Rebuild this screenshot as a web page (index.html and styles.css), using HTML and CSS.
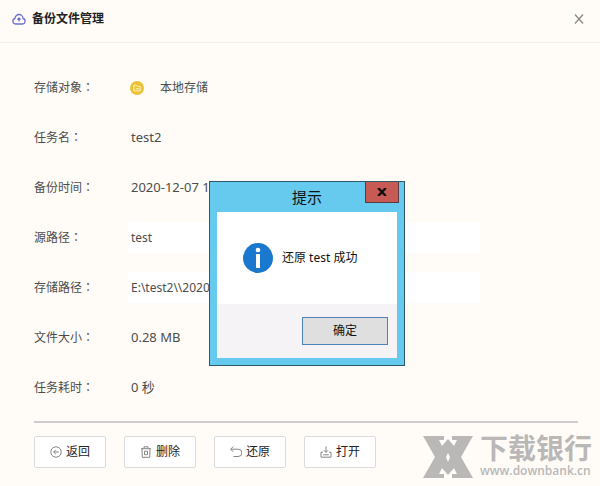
FILE: index.html
```html
<!DOCTYPE html>
<html lang="zh-CN">
<head>
    <meta charset="UTF-8">
    <meta name="viewport" content="width=device-width, initial-scale=1.0">
    <title>备份文件管理</title>
    <link rel="stylesheet" href="styles.css">
</head>
<body>

    <!-- HEADER -->
    <header class="header">
        <svg class="header-icon" viewBox="0 0 14 12" fill="none" stroke="#6a70d8" stroke-width="1.3" stroke-linecap="round" stroke-linejoin="round">
            <path d="M3.5 11a2.8 2.8 0 0 1-.5-5.5 4 4 0 0 1 8 0 2.8 2.8 0 0 1-.5 5.5z"/>
            <path d="M7 8V5.4M5.8 6.2L7 5l1.2 1.2"/>
        </svg>
        <h1>备份文件管理</h1>
        <button class="close" type="button" aria-label="关闭">
            <svg viewBox="0 0 10 10" fill="none" stroke="#8c8a88" stroke-width="1.3"><path d="M1 0.5l8 9M9 0.5l-8 9"/></svg>
        </button>
    </header>

    <!-- DETAIL -->
    <main>
        <div class="row">
            <span class="label">存储对象<span lang="zh-TW">：</span></span>
            <span class="value storage">
                <svg class="folder" viewBox="0 0 14 14">
                    <circle cx="7" cy="7" r="7" fill="#ebc136"/>
                    <path d="M3.8 9.9V4.2h2.5l.9 1.1h3v4.6zM5.8 7.8h3.2" fill="none" stroke="#fff3c0" stroke-width="1"/>
                </svg>
                本地存储
            </span>
        </div>
        <div class="row">
            <span class="label">任务名<span lang="zh-TW">：</span></span>
            <span class="value">test2</span>
        </div>
        <div class="row">
            <span class="label">备份时间<span lang="zh-TW">：</span></span>
            <span class="value">2020-12-07 1</span>
        </div>
        <div class="row">
            <label class="label" for="source">源路径<span lang="zh-TW">：</span></label>
            <input class="value field" id="source" type="text" value="test">
        </div>
        <div class="row">
            <label class="label" for="target">存储路径<span lang="zh-TW">：</span></label>
            <input class="value field" id="target" type="text" value="E:\test2\\2020">
        </div>
        <div class="row">
            <span class="label">文件大小<span lang="zh-TW">：</span></span>
            <span class="value">0.28 MB</span>
        </div>
        <div class="row">
            <span class="label">任务耗时<span lang="zh-TW">：</span></span>
            <span class="value">0 秒</span>
        </div>
    </main>

    <!-- ACTIONS -->
    <footer>
        <button class="action" type="button">
            <svg viewBox="0 0 12 12" fill="none" stroke="#858585"><circle cx="6" cy="6" r="5.2"/><path d="M8.8 6H3.6M5.8 3.8L3.6 6l2.2 2.2"/></svg>
            返回
        </button>
        <button class="action" type="button">
            <svg viewBox="0 0 12 12" fill="none" stroke="#858585"><path d="M1 2.7h10M4 2.5V.8h4v1.7M2 2.7l.3 8.6h7.4l.3-8.6M4.5 5.2h3v3.5h-3z"/></svg>
            删除
        </button>
        <button class="action" type="button">
            <svg viewBox="0 0 12 12" fill="none" stroke="#858585"><path d="M.8 3.2h7.4a3.2 3.2 0 0 1 0 7.3H3.5M3.2.6L.7 3.2l2.5 2.6"/></svg>
            还原
        </button>
        <button class="action" type="button">
            <svg viewBox="0 0 12 12" fill="none" stroke="#858585"><path d="M6 .5v5.8M3.8 4.2L6 6.4l2.2-2.2M3 6.2H1v5h10v-5H9M3.2 8.8h5.6"/></svg>
            打开
        </button>

        <div class="brand">
            <svg class="brand-logo" viewBox="0 0 50 42">
                <path fill="#b9b8b6" fill-rule="evenodd" d="M0 0h21v4h-5l3 6 6-7 6 7 3-6h-5V0h21L38 21l12 21H29v-4h5l-3-6-6 7-6-7-3 6h5v4H0l12-21zM25 17l-2 4 2 5 2-5z"/>
            </svg>
            <div class="brand-text">
                <div class="brand-name">下载银行</div>
                <div class="brand-url">www.downbank.cn</div>
            </div>
        </div>
    </footer>

    <!-- MESSAGE WINDOW -->
    <div class="dialog" role="dialog" aria-labelledby="dialogTitle">
        <div class="dialog-title" id="dialogTitle">提示</div>
        <button class="dialog-close" type="button" aria-label="关闭">
            <svg viewBox="0 0 10 8" fill="none" stroke="#111" stroke-width="2.4"><path d="M1.2 0l7.6 8M8.8 0L1.2 8"/></svg>
        </button>
        <div class="dialog-body">
            <svg class="info" viewBox="0 0 30 30">
                <circle cx="15" cy="15" r="15" fill="#1b78cf"/>
                <circle cx="15" cy="7" r="2.3" fill="#fff"/>
                <rect x="13" y="11" width="4" height="14" fill="#fff"/>
            </svg>
            <span>还原 test 成功</span>
        </div>
        <div class="dialog-foot">
            <button class="ok" type="button">确定</button>
        </div>
    </div>

</body>
</html>
```
FILE: styles.css
```css
* {
    box-sizing: border-box;
}

body {
    margin: 0;
    background: #fffcf7;
    color: #4c4c4c;
    font-family: "Noto Sans", "Noto Sans CJK SC", sans-serif;
    font-size: 12px;
    line-height: 18px;
}

button,
input {
    font: inherit;
    color: inherit;
}

/* HEADER */
.header {
    display: flex;
    align-items: center;
    height: 43px;
    padding: 0 16px 4px 12px;
    border-bottom: 1px solid #f1eff2;
}

.header-icon {
    width: 14px;
    height: 12px;
    margin-right: 6px;
}

.header h1 {
    margin: 0;
    font-size: 12px;
    font-weight: bold;
    color: #222;
}

.close {
    display: flex;
    margin-left: auto;
    padding: 0;
    border: none;
    background: none;
}

.close svg {
    width: 10px;
    height: 10px;
}

/* DETAIL */
main {
    margin: 0 22px 0 34px;
    padding: 19px 0 9px;
    border-bottom: 2px solid #cdcdcf;
}

.row {
    display: flex;
    align-items: center;
    height: 50px;
}

.label {
    width: 94px;
}

/* the colon sits in the middle of its square */
.label span {
    font-family: "Noto Sans CJK TC", sans-serif;
}

.value {
    padding: 0 3px;
    font-size: 13px;
}

.storage {
    display: flex;
    align-items: center;
    gap: 16px;
    padding: 2px 2px 0;
    font-size: 12px;
}

.folder {
    width: 14px;
    height: 14px;
}

.field {
    flex: 0 1 352px;
    min-width: 0;
    height: 31px;
    border: none;
    border-radius: 2px;
    background: #fff;
    font-size: 12px;
}

/* ACTIONS */
footer {
    display: flex;
    align-items: flex-start;
    gap: 18px;
    padding: 13px 8px 4px 34px;
}

.action {
    display: flex;
    align-items: center;
    justify-content: center;
    gap: 4px;
    width: 72px;
    height: 32px;
    padding: 0;
    border: 1px solid #dcdcdc;
    border-radius: 2px;
    background: #fff;
    color: #222;
}

.action svg {
    width: 12px;
    height: 12px;
}

.brand {
    display: flex;
    gap: 7px;
    margin-left: auto;
    color: #b9b8b6;
}

.brand-logo {
    width: 50px;
    height: 42px;
}

.brand-name {
    font-size: 28px;
    font-weight: bold;
    line-height: 24px;
}

.brand-url {
    font-family: "Open Sans", sans-serif;
    font-size: 12px;
    font-weight: 600;
    line-height: 22px;
}

/* MESSAGE WINDOW */
.dialog {
    position: absolute;
    top: 181px;
    left: 209px;
    width: 196px;
    padding: 0 7px 7px;
    border: 1px solid #2f5866;
    background: #65caed;
    color: #111;
}

.dialog-title {
    font-size: 15px;
    line-height: 30px;
    text-align: center;
}

.dialog-close {
    position: absolute;
    top: 0;
    right: 5px;
    display: flex;
    align-items: center;
    justify-content: center;
    width: 34px;
    height: 21px;
    padding: 0;
    border: 1px solid #5a3b40;
    border-top: none;
    background: #c75a55;
}

.dialog-close svg {
    width: 10px;
    height: 8px;
}

.dialog-body {
    display: flex;
    align-items: center;
    gap: 9px;
    height: 92px;
    padding-left: 26px;
    background: #fff;
}

.info {
    width: 30px;
    height: 30px;
}

.dialog-foot {
    display: flex;
    justify-content: flex-end;
    padding: 13px 9px;
    background: #f6f3f7;
}

.ok {
    width: 86px;
    height: 28px;
    padding: 0;
    border: 1px solid #4e83b8;
    background: #dfdfdf;
}
```
